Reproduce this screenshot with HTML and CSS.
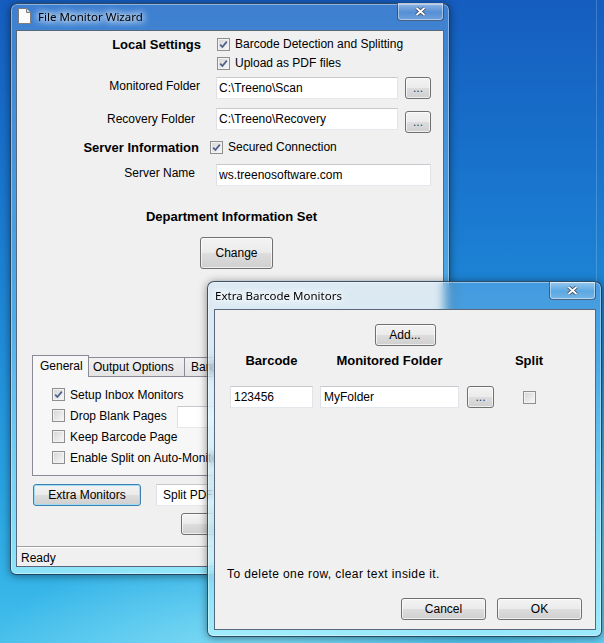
FILE: index.html
```html
<!DOCTYPE html>
<html lang="en">
<head>
    <meta charset="UTF-8">
    <title>File Monitor Wizard</title>
    <link rel="stylesheet" href="styles.css">
</head>
<body>
    <div class="edge"></div>

    <!-- main wizard window -->
    <div class="window main-win">
        <div class="titlebar">
            <svg class="app-icon" width="13" height="16" viewBox="0 0 13 16">
                <path d="M0.5 0.5H8.5L12.5 4.5V15.5H0.5Z" fill="#fbfbfb" stroke="#7d7d7d"/>
                <path d="M8.5 0.5V4.5H12.5" fill="#dedede" stroke="#7d7d7d"/>
            </svg>
            <span class="title">File Monitor Wizard</span>
            <div class="close">
                <svg width="13" height="11" viewBox="0 0 13 11">
                    <path d="M2.5 2L10.5 9M10.5 2L2.5 9" stroke="#3b4350" stroke-width="3.6"/>
                    <path d="M2.5 2L10.5 9M10.5 2L2.5 9" stroke="#fff" stroke-width="1.8"/>
                </svg>
            </div>
        </div>
        <div class="client">
            <div class="settings">
                <div class="row r-line">
                    <span class="lbl head">Local Settings</span>
                    <label class="check ml16"><span class="cb"><svg viewBox="0 0 11 11"><path d="M2.2 5.6L4.4 8L8.8 2.6"/></svg></span>Barcode Detection and Splitting</label>
                </div>
                <div class="row r-line mt1">
                    <span class="lbl"></span>
                    <label class="check ml16"><span class="cb"><svg viewBox="0 0 11 11"><path d="M2.2 5.6L4.4 8L8.8 2.6"/></svg></span>Upload as PDF files</label>
                </div>
                <div class="row r-field mt4">
                    <span class="lbl pr1 up">Monitored Folder</span>
                    <input class="field w182" type="text" value="C:\Treeno\Scan">
                    <button class="btn browse">...</button>
                </div>
                <div class="row r-field mt7">
                    <span class="lbl pr6">Recovery Folder</span>
                    <input class="field w182" type="text" value="C:\Treeno\Recovery">
                    <button class="btn browse low">...</button>
                </div>
                <div class="row r-line mt7">
                    <span class="lbl head pr2">Server Information</span>
                    <label class="check ml9"><span class="cb"><svg viewBox="0 0 11 11"><path d="M2.2 5.6L4.4 8L8.8 2.6"/></svg></span>Secured Connection</label>
                </div>
                <div class="row r-field mt7">
                    <span class="lbl pr6 up3">Server Name</span>
                    <input class="field w215" type="text" value="ws.treenosoftware.com">
                </div>
            </div>

            <div class="dept">Department Information Set</div>
            <button class="btn change">Change</button>

            <div class="tabs">
                <div class="tabstrip">
                    <div class="tab sel">General</div>
                    <div class="tab t-output">Output Options</div>
                    <div class="tab t-bar">Barcodes</div>
                </div>
                <div class="tabpanel">
                    <label class="check prow"><span class="cb"><svg viewBox="0 0 11 11"><path d="M2.2 5.6L4.4 8L8.8 2.6"/></svg></span>Setup Inbox Monitors</label>
                    <div class="prow">
                        <label class="check blank"><span class="cb off"></span>Drop Blank Pages</label>
                        <input class="field pages" type="text" value="">
                    </div>
                    <label class="check prow"><span class="cb off"></span>Keep Barcode Page</label>
                    <label class="check prow"><span class="cb off"></span>Enable Split on Auto-Monitors</label>
                </div>
            </div>

            <div class="actions">
                <button class="btn focus extra">Extra Monitors</button>
                <input class="field split" type="text" value="Split PDF">
            </div>
            <button class="btn save">Save</button>

            <div class="statusbar">Ready</div>
        </div>
    </div>

    <!-- extra monitors dialog -->
    <div class="window monitors-win">
        <div class="titlebar">
            <span class="title dlg-title">Extra Barcode Monitors</span>
            <div class="close">
                <svg width="13" height="11" viewBox="0 0 13 11">
                    <path d="M2.5 2L10.5 9M10.5 2L2.5 9" stroke="#3b4350" stroke-width="3.6"/>
                    <path d="M2.5 2L10.5 9M10.5 2L2.5 9" stroke="#fff" stroke-width="1.8"/>
                </svg>
            </div>
        </div>
        <div class="client dlg">
            <button class="btn add">Add...</button>
            <div class="grid-line heads">
                <div class="c-code">Barcode</div>
                <div class="c-folder">Monitored Folder</div>
                <div class="c-btn"></div>
                <div class="c-split">Split</div>
            </div>
            <div class="grid-line entry">
                <input class="field c-code" type="text" value="123456">
                <input class="field c-folder" type="text" value="MyFolder">
                <button class="btn c-btn">...</button>
                <div class="c-split"><span class="cb off"></span></div>
            </div>
            <div class="note">To delete one row, clear text inside it.</div>
            <div class="dlg-buttons">
                <button class="btn wide">Cancel</button>
                <button class="btn wide">OK</button>
            </div>
        </div>
    </div>
</body>
</html>
```

FILE: styles.css
```css
html, body {
    margin: 0;
    padding: 0;
}
body {
    position: relative;
    width: 604px;
    height: 643px;
    overflow: hidden;
    font-family: "Liberation Sans", Arial, sans-serif;
    font-size: 12px;
    color: #000;
    background:
        radial-gradient(260px 120px at 250px 660px, rgba(150, 230, 248, 0.75), rgba(150, 230, 248, 0) 100%),
        radial-gradient(200px 200px at 640px 560px, rgba(150, 230, 248, 0.6), rgba(150, 230, 248, 0) 100%),
        linear-gradient(180deg, #155dbf 0%, #1872cc 25%, #1f89d7 50%, #28a2e2 75%, #36b5e8 92%, #48c0ec 100%);
}
.edge {
    position: absolute;
    left: 596px;
    top: 0;
    width: 1px;
    height: 290px;
    background: rgba(255, 255, 255, 0.18);
}

/* window chrome (aero glass frame) */
.window {
    position: absolute;
    box-sizing: border-box;
    display: flex;
    flex-direction: column;
    border: 1px solid rgba(22, 40, 66, 0.8);
    border-radius: 7px 7px 6px 6px;
    background: linear-gradient(180deg, rgba(170, 215, 250, 0.28) 0%, rgba(160, 230, 255, 0.38) 55%, rgba(175, 245, 255, 0.75) 100%);
    box-shadow: inset 0 0 0 1px rgba(255, 255, 255, 0.4), 0 1px 9px rgba(0, 0, 0, 0.45);
    backdrop-filter: blur(4px);
}
.main-win {
    left: 10px;
    top: 3px;
    width: 440px;
    height: 572px;
    padding: 0 5px 7px;
}
.monitors-win {
    left: 207px;
    top: 281px;
    width: 395px;
    height: 356px;
    padding: 0 5px 6px 6px;
}
.titlebar {
    position: relative;
    display: flex;
    align-items: center;
    height: 26px;
    flex: none;
}
.monitors-win .titlebar {
    height: 27px;
}
.app-icon {
    margin: 0 7px 2px 2px;
}
.title {
    font-family: "Noto Sans", "Open Sans", sans-serif;
    font-size: 11.5px;
    color: #000;
    padding-bottom: 2px;
    text-shadow: 0 0 6px #fff, 0 0 8px #fff, 0 0 10px rgba(255, 255, 255, 0.9);
}
.dlg-title {
    margin-left: 1px;
    padding-bottom: 0;
}
.close {
    position: absolute;
    top: -1px;
    right: 0;
    width: 47px;
    height: 18px;
    box-sizing: border-box;
    display: flex;
    align-items: center;
    justify-content: center;
    border: 1px solid rgba(30, 50, 80, 0.65);
    border-top: none;
    border-radius: 0 0 4px 4px;
    background: linear-gradient(180deg, rgba(255, 255, 255, 0.45), rgba(255, 255, 255, 0.12) 55%, rgba(255, 255, 255, 0.25));
    box-shadow: inset 0 0 0 1px rgba(255, 255, 255, 0.45);
}
.monitors-win .close {
    top: 0;
}
.close svg {
    fill: none;
}
.client {
    flex: 1;
    display: flex;
    flex-direction: column;
    border: 1px solid rgba(40, 58, 84, 0.75);
    background: #f0f0f0;
}

/* shared controls */
.cb {
    box-sizing: border-box;
    width: 13px;
    height: 13px;
    flex: none;
    display: inline-flex;
    align-items: center;
    justify-content: center;
    border: 1px solid #8f8f8f;
    background: linear-gradient(135deg, #d4d4d4, #f9f9f9);
    box-shadow: inset 0 0 0 1px #f2f2f2;
}
.cb svg {
    width: 11px;
    height: 11px;
    fill: none;
    stroke: #4b5d8c;
    stroke-width: 1.7;
}
.check {
    display: flex;
    align-items: center;
    gap: 5px;
}
.field {
    box-sizing: border-box;
    height: 22px;
    margin: 0;
    padding: 0 0 0 2px;
    border: 1px solid;
    border-color: #c6c9ce #e2e4e8 #e4e8ec #dde0e5;
    background: #fff;
    font: inherit;
    color: #000;
    outline: none;
}
.btn {
    box-sizing: border-box;
    height: 22px;
    margin: 0;
    padding: 0;
    border: 1px solid #707070;
    border-radius: 3px;
    background: linear-gradient(180deg, #f3f3f3 0%, #ebebeb 48%, #dddddd 52%, #cfcfcf 100%);
    box-shadow: inset 0 0 0 1px rgba(255, 255, 255, 0.65);
    font: inherit;
    color: #000;
}
.btn.focus {
    border-color: #3c7fb1;
    box-shadow: inset 0 0 0 1px #9fdcf6;
}

/* local / server settings */
.settings {
    padding-top: 4px;
}
.row {
    display: flex;
    align-items: center;
}
.r-line {
    height: 18px;
}
.r-field {
    height: 24px;
}
.lbl {
    box-sizing: border-box;
    width: 184px;
    flex: none;
    text-align: right;
}
.head {
    font-weight: bold;
    font-size: 13px;
}
.mt1 { margin-top: 1px; }
.mt4 { margin-top: 4px; }
.mt7 { margin-top: 7px; }
.ml16 { margin-left: 16px; }
.ml9 { margin-left: 9px; }
.pr1 { padding-right: 1px; }
.pr2 { padding-right: 2px; }
.pr6 { padding-right: 6px; }
.up { margin-bottom: 4px; }
.up3 { margin-bottom: 5px; }
.w182 {
    width: 182px;
    margin-left: 15px;
}
.w215 {
    width: 215px;
    margin-left: 15px;
}
.browse {
    width: 26px;
    margin-left: 7px;
    color: #1d3a78;
    line-height: 14px;
}
.browse.low {
    margin-top: 6px;
}

.dept {
    margin-top: 22px;
    padding-left: 3px;
    line-height: 16px;
    text-align: center;
    font-weight: bold;
    font-size: 13px;
}
.change {
    align-self: flex-start;
    width: 73px;
    height: 32px;
    margin: 12px 0 0 183px;
}

/* tab control */
.tabs {
    margin: 86px 0 0 15px;
}
.tabstrip {
    display: flex;
    align-items: flex-end;
    height: 21px;
}
.tab {
    box-sizing: border-box;
    height: 19px;
    padding-left: 4px;
    line-height: 18px;
    border: 1px solid #898c95;
    border-bottom: none;
    border-left: none;
    background: linear-gradient(180deg, #f2f2f2, #e3e3e3);
}
.tab.sel {
    position: relative;
    z-index: 1;
    width: 57px;
    height: 22px;
    margin-bottom: -1px;
    padding-left: 7px;
    line-height: 20px;
    border-left: 1px solid #898c95;
    background: #f7f7f7;
}
.t-output {
    width: 96px;
}
.t-bar {
    width: 90px;
    padding-left: 6px;
}
.tabpanel {
    box-sizing: border-box;
    width: 398px;
    height: 100px;
    padding: 7px 0 0 19px;
    border: 1px solid #898c95;
    background: #f7f7f7;
}
.prow {
    display: flex;
    align-items: center;
    height: 21px;
}
.blank {
    width: 125px;
}
.pages {
    width: 60px;
    margin-top: 3px;
}

.actions {
    display: flex;
    margin: 8px 0 0 16px;
}
.extra {
    width: 108px;
}
.split {
    width: 150px;
    margin-left: 15px;
    padding-left: 6px;
}
.save {
    align-self: flex-start;
    width: 104px;
    margin: 7px 0 0 164px;
}
.statusbar {
    box-sizing: border-box;
    height: 20px;
    margin-top: auto;
    padding: 3px 0 0 4px;
    line-height: 16px;
    border-top: 1px solid #a0a0a0;
    box-shadow: inset 0 1px #fff;
}

/* extra barcode monitors dialog */
.dlg {
    align-items: flex-start;
}
.add {
    align-self: center;
    width: 61px;
    margin-top: 14px;
}
.grid-line {
    display: flex;
    align-items: center;
    margin-left: 15px;
}
.heads {
    margin-top: 7px;
    height: 16px;
    line-height: 16px;
    font-weight: bold;
    font-size: 13px;
    text-align: center;
}
.entry {
    margin-top: 17px;
}
.c-code {
    width: 83px;
    margin-right: 7px;
}
.c-folder {
    width: 139px;
    margin-right: 8px;
}
.c-btn {
    width: 27px;
    margin-right: 11px;
    color: #1d3a78;
}
.c-split {
    width: 48px;
    display: flex;
    justify-content: center;
}
.entry .field {
    padding-left: 3px;
}
.note {
    margin-top: auto;
    padding-left: 12px;
    line-height: 16px;
    letter-spacing: 0.4px;
}
.dlg-buttons {
    align-self: stretch;
    display: flex;
    justify-content: flex-end;
    gap: 11px;
    margin: 16px 13px 9px 0;
}
.wide {
    width: 85px;
}
```
